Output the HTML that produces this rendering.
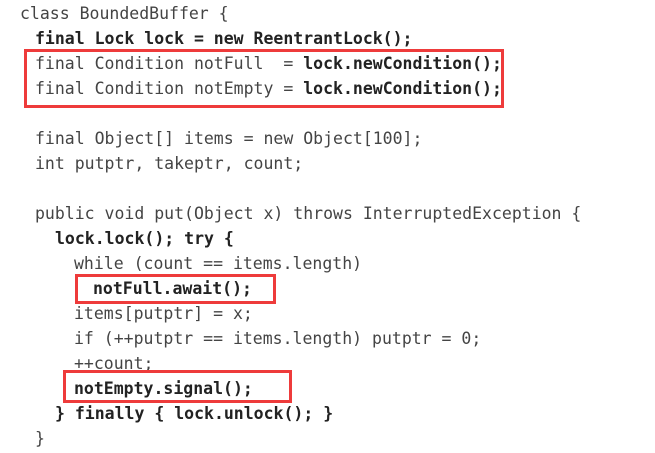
<!DOCTYPE html>
<html><head><style>
body{margin:0;width:655px;height:453px;background:#fff;position:relative;overflow:hidden;font-family:"DejaVu Sans Mono","Liberation Mono",monospace;font-size:16.5px;color:#444}
.l{position:absolute;white-space:pre;line-height:25px;height:25px}
b{color:#222;font-weight:bold}
.box{position:absolute;border:3px solid #ee3b3b;box-sizing:border-box}
</style></head><body>
<div class="l" style="left:20px;top:1px">class BoundedBuffer {</div>
<div class="l" style="left:35px;top:26px"><b>final Lock lock = new ReentrantLock();</b></div>
<div class="l" style="left:35px;top:51px">final Condition notFull  = <b>lock.newCondition();</b></div>
<div class="l" style="left:35px;top:76px">final Condition notEmpty = <b>lock.newCondition();</b></div>
<div class="l" style="left:35px;top:126px">final Object[] items = new Object[100];</div>
<div class="l" style="left:35px;top:151px">int putptr, takeptr, count;</div>
<div class="l" style="left:35px;top:201px">public void put(Object x) throws InterruptedException {</div>
<div class="l" style="left:55px;top:226px"><b>lock.lock(); try {</b></div>
<div class="l" style="left:74px;top:251px">while (count == items.length)</div>
<div class="l" style="left:93px;top:276px"><b>notFull.await();</b></div>
<div class="l" style="left:74px;top:301px">items[putptr] = x;</div>
<div class="l" style="left:74px;top:326px">if (++putptr == items.length) putptr = 0;</div>
<div class="l" style="left:74px;top:351px">++count;</div>
<div class="l" style="left:74px;top:376px"><b>notEmpty.signal();</b></div>
<div class="l" style="left:55px;top:401px"><b>} finally { lock.unlock(); }</b></div>
<div class="l" style="left:35px;top:426px">}</div>
<div class="box" style="left:24px;top:49px;width:480px;height:59px"></div>
<div class="box" style="left:75px;top:274px;width:201px;height:30px"></div>
<div class="box" style="left:63px;top:370px;width:229px;height:33px"></div>
</body></html>
